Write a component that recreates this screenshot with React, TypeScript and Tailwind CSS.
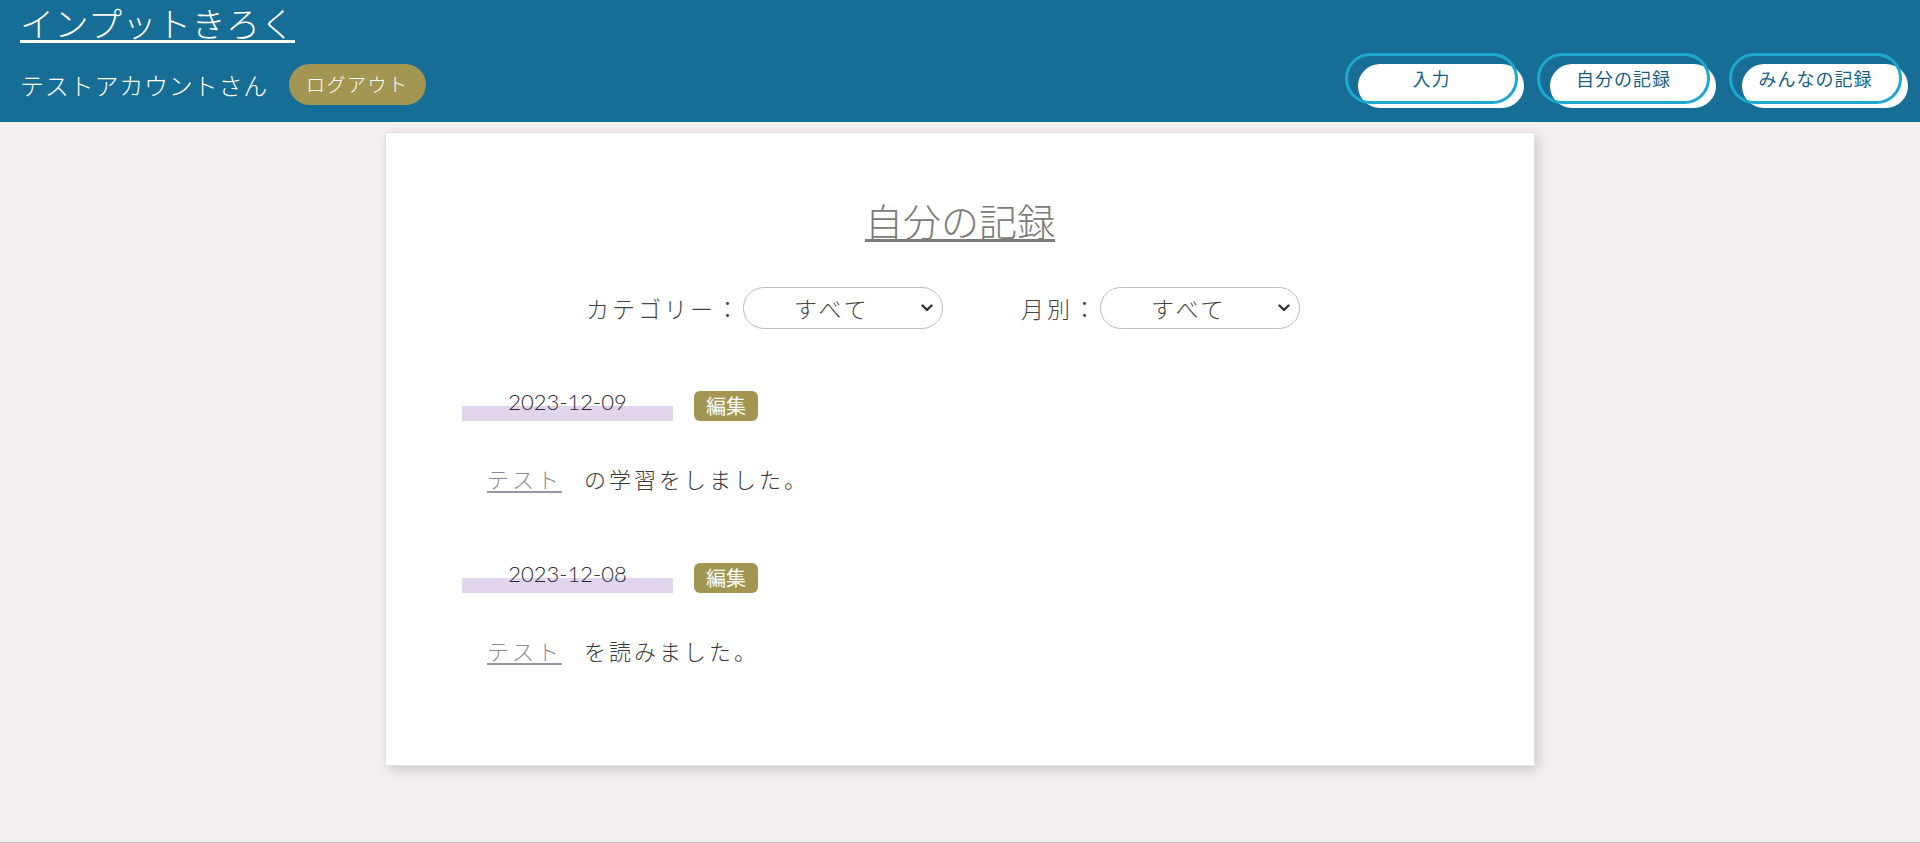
import React from "react";

function NavBtn({ label }: { label: string }) {
  return (
    <div className="relative w-[173px] h-[51px]">
      <div className="absolute left-[13px] top-[11px] w-[166px] h-[44px] rounded-full bg-white" />
      <div className="absolute inset-0 rounded-full border-[3px] border-[#1ea8cf]" />
      <span className="relative flex h-full items-center justify-center text-[18px] tracking-[1px] text-[#185f88]">
        {label}
      </span>
    </div>
  );
}

function Select() {
  return (
    <div className="flex h-[42px] w-[200px] items-center rounded-full border border-[#bdbdbd] bg-white">
      <span className="pl-[50px] text-[23px] leading-none tracking-[3px] text-[#444] font-light">すべて</span>
      <svg className="ml-auto mr-[9px]" width="12" height="8" viewBox="0 0 12 8">
        <path d="M1.5 1.5 L6 6 L10.5 1.5" fill="none" stroke="#333" strokeWidth="2.4" strokeLinecap="round" strokeLinejoin="round" />
      </svg>
    </div>
  );
}

function Entry({ date, sentence, first }: { date: string; sentence: string; first?: boolean }) {
  return (
    <div className={first ? "mt-[54px]" : "mt-[62px]"}>
      <div className="flex items-end gap-[21px]">
        <div className="h-[38px] w-[211px] bg-[linear-gradient(transparent_60.5%,#e1d5ee_60.5%)] text-center font-['Lato',sans-serif] text-[22px] font-light leading-[38px] text-[#2c2838]">
          {date}
        </div>
        <span className="flex h-[30px] w-[64px] items-center justify-center rounded-[6px] bg-[#a39552] text-[20px] leading-none text-white">
          編集
        </span>
      </div>
      <p className="mt-[46px] flex items-start pl-[25px] text-[22px] leading-none font-light">
        <span className="border-b-2 border-[#9a94a6] pb-[2px] tracking-[3px] text-[#8f8a9c]">テスト</span>
        <span className="ml-[22px] tracking-[3px] text-[#3a3a3a]">{sentence}</span>
      </p>
    </div>
  );
}

export default function App() {
  return (
    <div className="flex min-h-[843px] flex-col font-['Noto_Sans_CJK_JP',sans-serif]">
      <header className="flex h-[122px] shrink-0 justify-between bg-[#166d96]">
        <div className="pl-5 pt-[6px]">
          <h1 className="inline-block border-b-[3px] border-white text-[34px] font-light leading-none tracking-[0.5px] text-white">
            インプットきろく
          </h1>
          <div className="mt-[21px] flex items-center gap-[21px]">
            <span className="text-[24px] font-light leading-none tracking-[0.8px] text-white">テストアカウントさん</span>
            <button className="h-[41px] rounded-full bg-[#a39552] px-[17px] text-[19px] font-light tracking-[1.5px] text-white">
              ログアウト
            </button>
          </div>
        </div>
        <nav className="flex gap-[19px] pr-[18px] pt-[53px]">
          <NavBtn label="入力" />
          <NavBtn label="自分の記録" />
          <NavBtn label="みんなの記録" />
        </nav>
      </header>
      <main className="flex-1 border-b border-[#c9c5bb] bg-[#f3efee] pt-[10px]">
        <section className="mx-auto w-[1150px] border border-[#e4e0df] bg-white px-[76px] pb-[100px] pt-[68px] shadow-[3px_4px_10px_rgba(0,0,0,0.15)]">
          <div className="flex justify-center">
            <h2 className="inline-block border-b-[3px] border-[#7b7b7b] text-[38px] font-light leading-none text-[#7b7b7b]">
              自分の記録
            </h2>
          </div>
          <div className="mt-[45px] flex items-center justify-center pr-[34px]">
            <div className="flex items-center">
              <span className="mr-[1px] text-[23px] font-light leading-none tracking-[3px] text-[#444]">カテゴリー：</span>
              <Select />
            </div>
            <div className="ml-[78px] flex items-center">
              <span className="mr-[1px] text-[23px] font-light leading-none tracking-[3px] text-[#444]">月別：</span>
              <Select />
            </div>
          </div>
          <Entry first date="2023-12-09" sentence="の学習をしました。" />
          <Entry date="2023-12-08" sentence="を読みました。" />
        </section>
      </main>
    </div>
  );
}
